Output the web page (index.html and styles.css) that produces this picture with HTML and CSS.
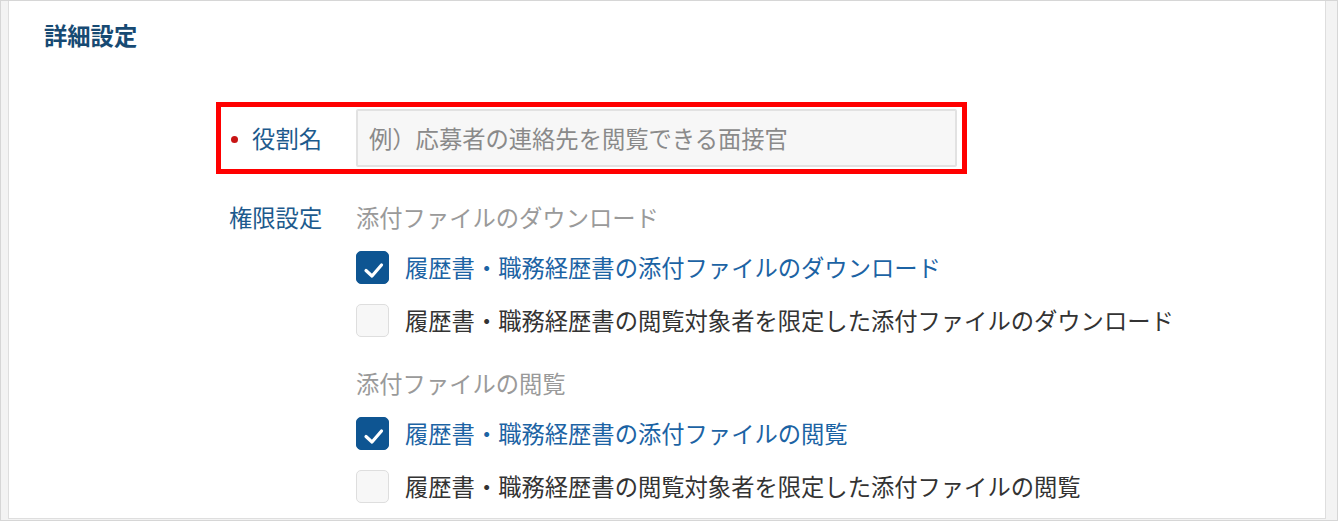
FILE: index.html
```html
<!DOCTYPE html>
<html lang="ja">
<head>
    <meta charset="UTF-8">
    <meta name="viewport" content="width=device-width, initial-scale=1.0">
    <title>詳細設定</title>
    <link rel="stylesheet" href="styles.css">
</head>
<body>
    <div class="card">
        <h2 class="section-title">詳細設定</h2>

        <div class="form">
            <div class="form-row highlight">
                <div class="form-label"><span class="required"></span>役割名</div>
                <div class="form-field">
                    <input type="text" class="text-input" placeholder="例）応募者の連絡先を閲覧できる面接官">
                </div>
            </div>

            <div class="form-row permissions">
                <div class="form-label">権限設定</div>
                <div class="form-field">
                    <div class="group">
                        <div class="group-title">添付ファイルのダウンロード</div>
                        <label class="check checked">
                            <span class="box">
                                <svg viewBox="0 0 33 33" width="33" height="33"><path d="M10 19.5 L16 25 L25.5 14" fill="none" stroke="#fff" stroke-width="3.2" stroke-linecap="round" stroke-linejoin="round"/></svg>
                            </span>
                            <span class="check-text">履歴書・職務経歴書の添付ファイルのダウンロード</span>
                        </label>
                        <label class="check">
                            <span class="box"></span>
                            <span class="check-text">履歴書・職務経歴書の閲覧対象者を限定した添付ファイルのダウンロード</span>
                        </label>
                    </div>

                    <div class="group">
                        <div class="group-title">添付ファイルの閲覧</div>
                        <label class="check checked">
                            <span class="box">
                                <svg viewBox="0 0 33 33" width="33" height="33"><path d="M10 19.5 L16 25 L25.5 14" fill="none" stroke="#fff" stroke-width="3.2" stroke-linecap="round" stroke-linejoin="round"/></svg>
                            </span>
                            <span class="check-text">履歴書・職務経歴書の添付ファイルの閲覧</span>
                        </label>
                        <label class="check">
                            <span class="box"></span>
                            <span class="check-text">履歴書・職務経歴書の閲覧対象者を限定した添付ファイルの閲覧</span>
                        </label>
                    </div>
                </div>
            </div>
        </div>
    </div>
</body>
</html>
```

FILE: styles.css
```css
html, body {
    margin: 0;
}

body {
    font-family: "Noto Sans CJK JP", "Noto Sans", sans-serif;
    font-size: 23.3px;
    color: #333;
    background-color: #f3f3f3;
    border: 1px solid #d6d6d6;
    box-sizing: border-box;
    height: 521px;
    padding: 0 11px 1px 7px;
    overflow: hidden;
}

.card {
    background-color: #fff;
    border: 1px solid #dedede;
    border-top: none;
    box-sizing: border-box;
    height: 518px;
    padding: 18px 0 0 35px;
    overflow: hidden;
}

.section-title {
    margin: 0 0 51px;
    font-size: 23.3px;
    line-height: 32px;
    font-weight: bold;
    color: #174a73;
}

.form {
    margin-left: 172px;
}

.form-row {
    display: flex;
    gap: 34px;
    width: fit-content;
    border: 5px solid transparent;
    padding: 2px 5px 2px 8px;
}

.form-row.highlight {
    border-color: #ff0000;
    align-items: center;
}

.form-row.permissions {
    margin-top: 20px;
    align-items: flex-start;
}

.form-label {
    width: 93px;
    text-align: right;
    line-height: 32px;
    color: #1d5a8d;
    white-space: nowrap;
}

.required {
    display: inline-block;
    width: 7px;
    height: 7px;
    border-radius: 50%;
    background-color: #c81414;
    margin-right: 14px;
    vertical-align: middle;
    position: relative;
    top: -2px;
}

.text-input {
    width: 601px;
    height: 58px;
    box-sizing: border-box;
    border: 2px solid #e2e2e2;
    border-radius: 2px;
    background-color: #f7f7f7;
    padding: 0 11px;
    font-family: inherit;
    font-size: 23.3px;
    color: #333;
    outline: none;
}

.text-input::placeholder {
    color: #8a8a8a;
}

.group + .group {
    margin-top: 30px;
}

.group-title {
    line-height: 32px;
    color: #9a9a9a;
    margin-bottom: 18px;
}

.check {
    display: flex;
    align-items: center;
    gap: 16px;
    height: 33px;
    cursor: pointer;
}

.check + .check {
    margin-top: 20px;
}

.box {
    width: 33px;
    height: 33px;
    box-sizing: border-box;
    border-radius: 5px;
    border: 1.5px solid #dedede;
    background-color: #f7f7f7;
    flex-shrink: 0;
    display: flex;
}

.box svg {
    display: block;
    margin: -1.5px;
}

.check.checked .box {
    background-color: #0e5592;
    border-color: #0e5592;
}

.check-text {
    line-height: 33px;
    white-space: nowrap;
    color: #333;
}

.check.checked .check-text {
    color: #1c63a4;
}
```
